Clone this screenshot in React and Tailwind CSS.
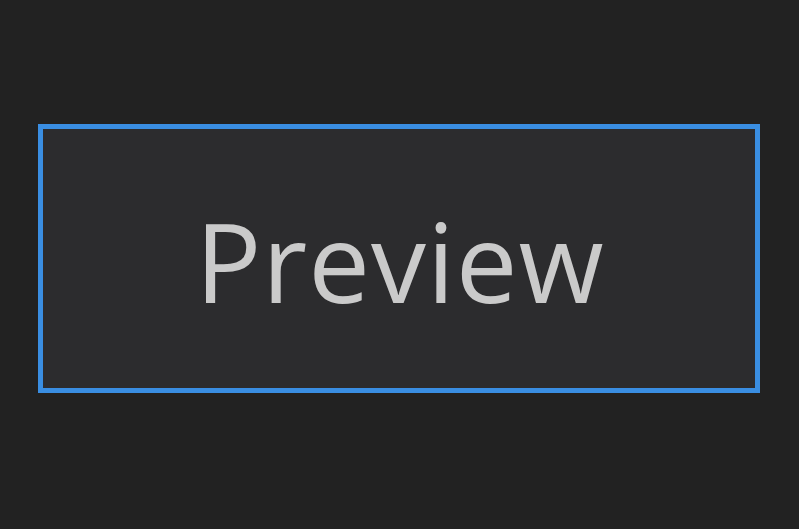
export default function App() {
  return (
    <div className="w-[799px] h-[529px] bg-[#222222] pt-[124px] pl-[38px] overflow-hidden">
      <div className="w-[722px] h-[269px] border-[5px] border-[#3a8ee2] bg-[#2c2c2e] flex items-center justify-center pt-[3px] pl-[2px]">
        <span
          className="text-[110px] leading-none text-[#cacaca] tracking-[1px]"
          style={{ fontFamily: '"Open Sans", "Noto Sans", sans-serif' }}
        >
          Preview
        </span>
      </div>
    </div>
  );
}
